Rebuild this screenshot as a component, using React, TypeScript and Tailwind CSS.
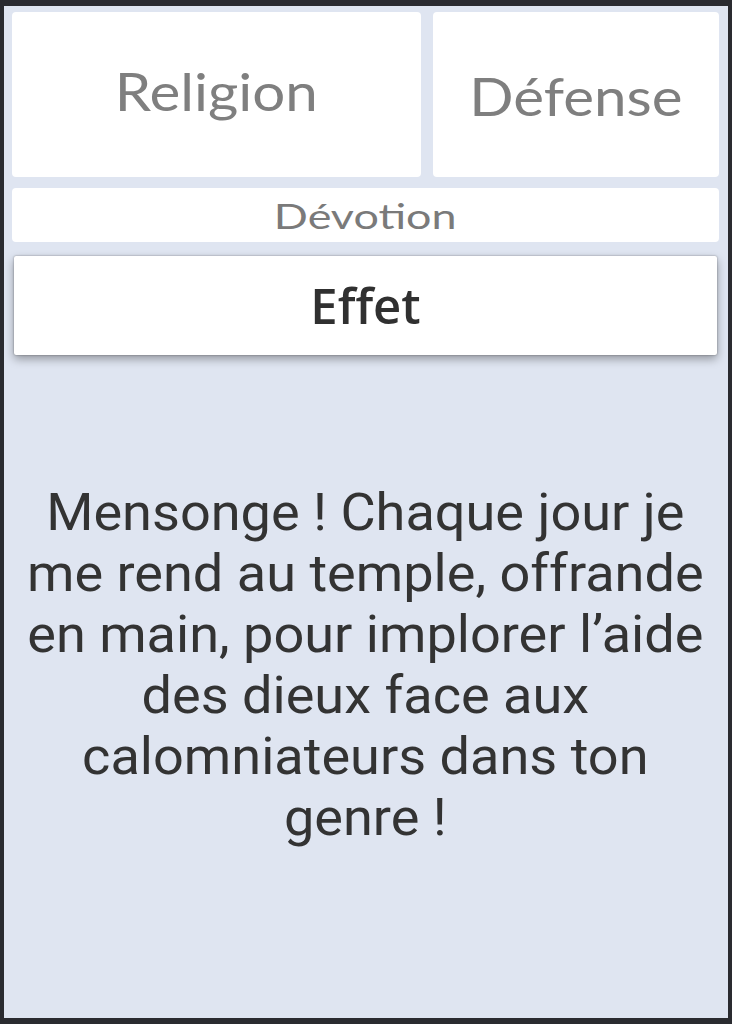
export default function App() {
  const lines = [
    'Mensonge ! Chaque jour je',
    'me rend au temple, offrande',
    'en main, pour implorer l\u2019aide',
    'des dieux face aux',
    'calomniateurs dans ton',
    'genre !',
  ];

  return (
    <div className="w-[732px] h-[1024px] bg-[#2a2b30] pt-[6px] pb-[6px] pl-[4px] pr-[4px]">
      <div className="h-full bg-[#dfe5f1] flex flex-col pt-[6px] pl-[8px] pr-[9px]">
        {/* top cards */}
        <div className="flex gap-[12px] h-[165px]">
          <div className="w-[409px] bg-white rounded-[4px] flex items-center justify-center pb-[8px]">
            <span className="font-['Lato',sans-serif] text-[53px] text-[#7f7f7f] scale-x-[1.1] inline-block">Religion</span>
          </div>
          <div className="flex-1 bg-white rounded-[4px] flex items-center justify-center pt-[2px]">
            <span className="font-['Lato',sans-serif] text-[53px] text-[#7f7f7f] scale-x-[1.1] inline-block">Défense</span>
          </div>
        </div>

        <div className="mt-[11px] h-[54px] bg-white rounded-[4px] flex items-center justify-center">
          <span className="font-['Lato',sans-serif] text-[34px] text-[#7a7a7a] scale-x-[1.32] inline-block">Dévotion</span>
        </div>

        <div className="mt-[14px] mx-[2px] h-[99px] bg-white rounded-[2px] shadow-[0_4px_10px_rgba(0,0,0,0.35),0_0_2px_rgba(0,0,0,0.4)] flex items-center justify-center">
          <span className="font-['Open_Sans',sans-serif] font-semibold text-[49px] text-[#303030]">Effet</span>
        </div>

        <div className="flex-1 flex items-center justify-center pb-[43px]">
          <p className="font-['Roboto',sans-serif] text-[52px] leading-[61px] text-[#333333] text-center whitespace-nowrap scale-x-[1.04]">
            {lines.map((l, i) => (
              <span key={i} className="block">
                {l}
              </span>
            ))}
          </p>
        </div>
      </div>
    </div>
  );
}
